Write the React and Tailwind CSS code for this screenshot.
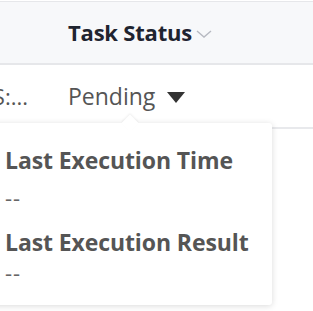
import React from "react";

const App = () => {
  return (
    <div
      className="relative w-[313px] h-[311px] bg-white overflow-hidden"
      style={{ fontFamily: '"Open Sans", "Noto Sans", sans-serif' }}
    >
      {/* header */}
      <div className="h-[64px] mt-[1px] border-t border-b-2 border-[#e6e7ea] bg-[#f7f8fa] flex items-center pl-[68px]">
        <span className="text-[22px] font-bold text-[#1f2430] tracking-[-0.2px]">Task Status</span>
        <svg width="16" height="10" viewBox="0 0 16 10" className="ml-[4px] mt-[2px]">
          <path d="M1 2 L8 8 L15 2" fill="none" stroke="#b7bac2" strokeWidth="1.4" />
        </svg>
      </div>

      {/* row */}
      <div className="h-[62px] flex items-center">
        <div className="w-[68px] shrink-0 flex justify-end pr-[40px] overflow-hidden">
          <span className="text-[22px] text-[#555] whitespace-nowrap">S:...</span>
        </div>
        <span className="text-[23px] text-[#555]">Pending</span>
        <svg width="18" height="11" viewBox="0 0 18 11" className="ml-[12px] mt-[2px]">
          <path d="M0 0 L18 0 L9 11 Z" fill="#333" />
        </svg>
      </div>
      <div className="ml-[272px] h-[2px] bg-[#e8e9ec]" />

      {/* popover */}
      <div className="absolute left-[-8px] top-[123px] w-[280px] h-[182px] bg-white rounded-[3px] shadow-[0_1px_6px_rgba(0,0,0,0.15)] pl-[13px] pt-[23px]">
        <div className="absolute left-[132px] -top-[6px] w-[12px] h-[12px] bg-white rotate-45 shadow-[-1px_-1px_2px_rgba(0,0,0,0.06)]" />
        <div className="relative text-[23px] font-bold text-[#555] leading-[28px] tracking-[-0.1px]">Last Execution Time</div>
        <div className="relative text-[22px] text-[#666] leading-[22px] mt-[12px] tracking-[1px]">--</div>
        <div className="relative text-[23px] font-bold text-[#555] leading-[28px] mt-[20px] tracking-[-0.1px]">Last Execution Result</div>
        <div className="relative text-[22px] text-[#666] leading-[22px] mt-[5px] tracking-[1px]">--</div>
      </div>
    </div>
  );
};

export default App;
